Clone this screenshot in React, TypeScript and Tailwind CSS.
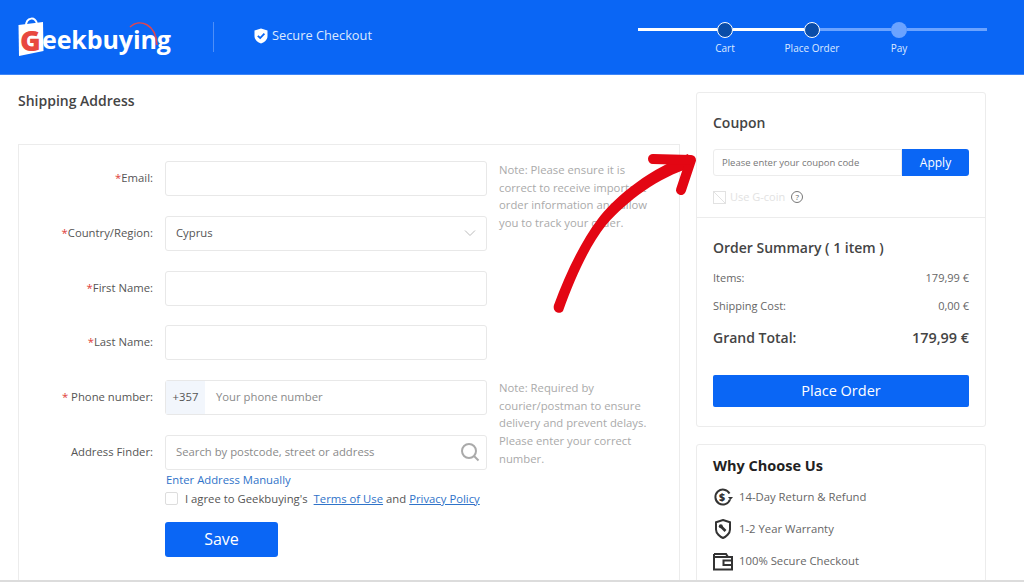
import React from "react";

const font = { fontFamily: '"Open Sans", "Liberation Sans", sans-serif' };

function Logo() {
  return (
    <div className="relative w-[155px] h-[42px] shrink-0">
      <svg className="absolute left-0 top-0" width="155" height="42" viewBox="0 0 155 42" fill="none">
        <path d="M0.5 9 L25 6 L25.5 35 L1 40 Z" fill="#fff" />
        <path d="M8 10 C8 1 18 0 19 8" stroke="#fff" strokeWidth="2" />
        <path d="M112 11 C122 2 138 8 139 29" stroke="#e0454f" strokeWidth="1.6" />
      </svg>
      <span className="absolute left-[2px] top-[9px] text-[28px] leading-[30px] font-extrabold text-[#e8483f]">G</span>
      <span className="absolute left-[24px] top-[8px] text-[25px] leading-[30px] font-bold text-white tracking-[-0.1px]">eekbuying</span>
    </div>
  );
}

function Step({ label, done }: { label: string; done: boolean }) {
  return (
    <div className="relative shrink-0">
      <div
        className={
          done
            ? "w-[16px] h-[16px] rounded-full bg-[#0a4da8] border-[1.5px] border-white"
            : "w-[16px] h-[16px] rounded-full bg-[#6ba3ff]"
        }
      />
      <span className="absolute left-1/2 -translate-x-1/2 top-[19px] text-[10px] leading-[14px] whitespace-nowrap text-[#dce9ff]">
        {label}
      </span>
    </div>
  );
}

function Label({ text, required = true, spaced = false }: { text: string; required?: boolean; spaced?: boolean }) {
  return (
    <div className="flex items-center justify-end h-[35px] text-[11.3px] text-[#555]">
      {required && <span className={spaced ? "text-[#e0403a] mr-[3px]" : "text-[#e0403a]"}>*</span>}
      {text}
    </div>
  );
}

function Field({ children }: { children?: React.ReactNode }) {
  return (
    <div className="h-[35px] w-[322px] border border-[#e8e8e8] rounded-[3px] flex items-center text-[11.3px] text-[#8a8a8a]">
      {children}
    </div>
  );
}

function Row({ label, value, strong }: { label: string; value: string; strong?: boolean }) {
  return (
    <div className={strong ? "flex justify-between text-[14px] font-semibold text-[#444]" : "flex justify-between text-[11px] text-[#666]"}>
      <span>{label}</span>
      <span className={strong ? "text-[14.4px]" : ""}>{value}</span>
    </div>
  );
}

function Perk({ icon, text }: { icon: React.ReactNode; text: string }) {
  return (
    <div className="flex items-center gap-[6px] h-[20px] text-[11.3px] text-[#666]">
      <span className="w-[20px] flex justify-center">{icon}</span>
      {text}
    </div>
  );
}

export default function App() {
  return (
    <div className="relative h-[582px] w-[1024px] overflow-hidden bg-white" style={font}>
      <header className="h-[75px] bg-[#0a66f5] flex items-center pl-[18px] border-b border-[#3f86f7]">
        <Logo />
        <div className="w-px h-[30px] bg-[#4e8ff8] ml-[40px]" />
        <div className="flex items-center gap-[4px] ml-[40px] -mt-[3px] text-[12.8px] text-[#dce9ff]">
          <svg width="14" height="16" viewBox="0 0 14 16">
            <path d="M7 0.5 L13.5 2.5 V8 C13.5 12 10 14.5 7 15.5 C4 14.5 0.5 12 0.5 8 V2.5 Z" fill="#fff" />
            <path d="M3.8 7.8 L6.2 10 L10.4 5.6" stroke="#0a66f5" strokeWidth="1.8" fill="none" />
          </svg>
          Secure Checkout
        </div>
        <div className="ml-[266px] w-[349px] flex items-center -mt-[15px]">
          <div className="w-[79px] h-[2.5px] bg-white" />
          <Step label="Cart" done />
          <div className="w-[71px] h-[2.5px] bg-white" />
          <Step label="Place Order" done />
          <div className="w-[71px] h-[2.5px] bg-[#6ba3ff]" />
          <Step label="Pay" done={false} />
          <div className="w-[80px] h-[2.5px] bg-[#6ba3ff]" />
        </div>
      </header>

      <div className="flex pl-[18px]">
        <main className="w-[662px]">
          <h2 className="mt-[16px] h-[53px] text-[14px] leading-[20px] font-semibold text-[#444]">Shipping Address</h2>
          <div className="border border-[#ececec] h-[500px] pt-[16px] grid grid-cols-[134px_322px_1fr] gap-x-[12px] gap-y-[19.75px] content-start">
            <Label text="Email:" />
            <Field />
            <p className="row-span-4 text-[11.3px] leading-[17.7px] text-[#aaa] w-[152px]">
              Note: Please ensure it is correct to receive important order information and allow you to track your order.
            </p>

            <Label text="Country/Region:" />
            <Field>
              <span className="flex-1 pl-[10px] text-[#555]">Cyprus</span>
              <svg className="mr-[10px]" width="12" height="8" viewBox="0 0 12 8" fill="none">
                <path d="M1 1.5 L6 6.5 L11 1.5" stroke="#bbb" strokeWidth="1" />
              </svg>
            </Field>

            <Label text="First Name:" />
            <Field />

            <Label text="Last Name:" />
            <Field />

            <Label text="Phone number:" spaced />
            <Field>
              <span className="h-full w-[39px] bg-[#f2f6fc] flex items-center justify-center text-[#555]">+357</span>
              <span className="pl-[11px]">Your phone number</span>
            </Field>
            <p className="row-span-2 -mt-[1px] text-[11.3px] leading-[17.7px] text-[#aaa] w-[152px]">
              Note: Required by courier/postman to ensure delivery and prevent delays. Please enter your correct number.
            </p>

            <Label text="Address Finder:" required={false} />
            <div className="w-[322px]">
              <Field>
                <span className="flex-1 pl-[10px]">Search by postcode, street or address</span>
                <svg className="mr-[6px]" width="20" height="20" viewBox="0 0 20 20" fill="none">
                  <circle cx="9" cy="9" r="7" stroke="#aaa" strokeWidth="2" />
                  <path d="M14 14 L18.5 18.5" stroke="#aaa" strokeWidth="2" />
                </svg>
              </Field>
              <div className="mt-[1px] pl-[1px] text-[11.3px] leading-[18px] text-[#2f73c9]">Enter Address Manually</div>
              <div className="mt-[1px] flex items-center text-[11.3px] leading-[18px] text-[#555] whitespace-nowrap">
                <span className="w-[13px] h-[13px] border border-[#ddd] rounded-[2px] mr-[7px]" />
                I agree to Geekbuying's
                <a className="ml-[6px] mr-[3px] underline text-[#2f73c9]">Terms of Use</a>
                and
                <a className="ml-[3px] underline text-[#2f73c9]">Privacy Policy</a>
              </div>
              <button className="mt-[14px] w-[113px] h-[35px] rounded-[3px] bg-[#0a66f5] text-white text-[16px]">Save</button>
            </div>
          </div>
        </main>

        <aside className="ml-[16px] w-[290px] pt-[17px] flex flex-col gap-[17px]">
          <section className="h-[335px] border border-[#ececec] rounded-[3px]">
            <div className="h-[125px] px-[16px] pt-[20px] border-b border-[#ececec]">
              <h3 className="text-[14px] leading-[20px] font-semibold text-[#444]">Coupon</h3>
              <div className="mt-[16px] flex h-[27px]">
                <div className="flex-1 border border-[#ececec] rounded-l-[3px] pl-[8px] text-[9.5px] leading-[25px] text-[#777]">
                  Please enter your coupon code
                </div>
                <button className="w-[67px] bg-[#0a66f5] rounded-r-[3px] text-white text-[12px]">Apply</button>
              </div>
              <div className="mt-[13px] flex items-center text-[11px] text-[#e2e2e2]">
                <svg className="mr-[4px]" width="13" height="13" viewBox="0 0 13 13" fill="none">
                  <rect x="0.5" y="0.5" width="12" height="12" stroke="#e2e2e2" />
                  <path d="M1 1 L12 12" stroke="#e2e2e2" />
                </svg>
                Use G-coin
                <span className="ml-[6px] w-[12px] h-[12px] rounded-full border border-[#777] text-[8px] leading-[10px] text-center text-[#666]">?</span>
              </div>
            </div>
            <div className="px-[16px] pt-[20px]">
              <h3 className="text-[14px] leading-[20px] font-semibold text-[#444]">Order Summary ( 1 item )</h3>
              <div className="mt-[12px]"><Row label="Items:" value="179,99 €" /></div>
              <div className="mt-[11px]"><Row label="Shipping Cost:" value="0,00 €" /></div>
              <div className="mt-[13px]"><Row label="Grand Total:" value="179,99 €" strong /></div>
              <button className="mt-[26px] w-full h-[32px] rounded-[2px] bg-[#0a66f5] text-white text-[14.5px]">Place Order</button>
            </div>
          </section>

          <section className="h-[200px] border border-[#ececec] rounded-[3px] px-[16px] pt-[11px]">
            <h3 className="text-[14.5px] leading-[20px] font-bold text-[#222]">Why Choose Us</h3>
            <div className="mt-[11px] flex flex-col gap-[12px]">
              <Perk
                text="14-Day Return & Refund"
                icon={
                  <svg width="20" height="20" viewBox="0 0 20 20" fill="none">
                    <path d="M16.5 6.5 A7.5 7.5 0 1 0 17 12.5" stroke="#333" strokeWidth="2" />
                    <path d="M15 10 L20 10 L17.5 13 Z" fill="#333" />
                    <text x="6" y="13.5" fontSize="10.5" fontWeight="800" fill="#333">$</text>
                  </svg>
                }
              />
              <Perk
                text="1-2 Year Warranty"
                icon={
                  <svg width="18" height="20" viewBox="0 0 18 20" fill="none">
                    <path d="M9 1 L16 3.2 V10.5 C16 14.5 12 17.8 9 19 C6 17.8 2 14.5 2 10.5 V3.2 Z" stroke="#333" strokeWidth="2" />
                    <path d="M6.5 7 L11.5 12" stroke="#333" strokeWidth="2.6" />
                    <circle cx="6.8" cy="7.2" r="2" fill="#333" />
                  </svg>
                }
              />
              <Perk
                text="100% Secure Checkout"
                icon={
                  <svg width="20" height="19" viewBox="0 0 20 19" fill="none">
                    <path d="M1 2 H13 L15 5 M1 2 V17.5 H19 V5 H1" stroke="#333" strokeWidth="2" />
                    <path d="M19 8.5 H10.5 V13 H19" stroke="#333" strokeWidth="2" />
                  </svg>
                }
              />
            </div>
          </section>
        </aside>
      </div>

      {/* annotation arrow over the page */}
      <svg className="absolute left-[540px] top-[140px]" width="170" height="180" viewBox="0 0 170 180" fill="none">
        <path d="M14 165 C26 132 42 100 58 79 C72 61 100 34 148 14 L152 27 C118 38 88 60 66 85 C50 105 36 135 23 171 C20 175 12 172 14 165 Z" fill="#e30613" />
        <path d="M113 19 L151 20 L141 50" stroke="#e30613" strokeWidth="10" strokeLinecap="round" strokeLinejoin="round" />
      </svg>

      <div className="absolute left-0 right-0 bottom-0 h-[2px] bg-[#dcdcdc]" />
    </div>
  );
}
